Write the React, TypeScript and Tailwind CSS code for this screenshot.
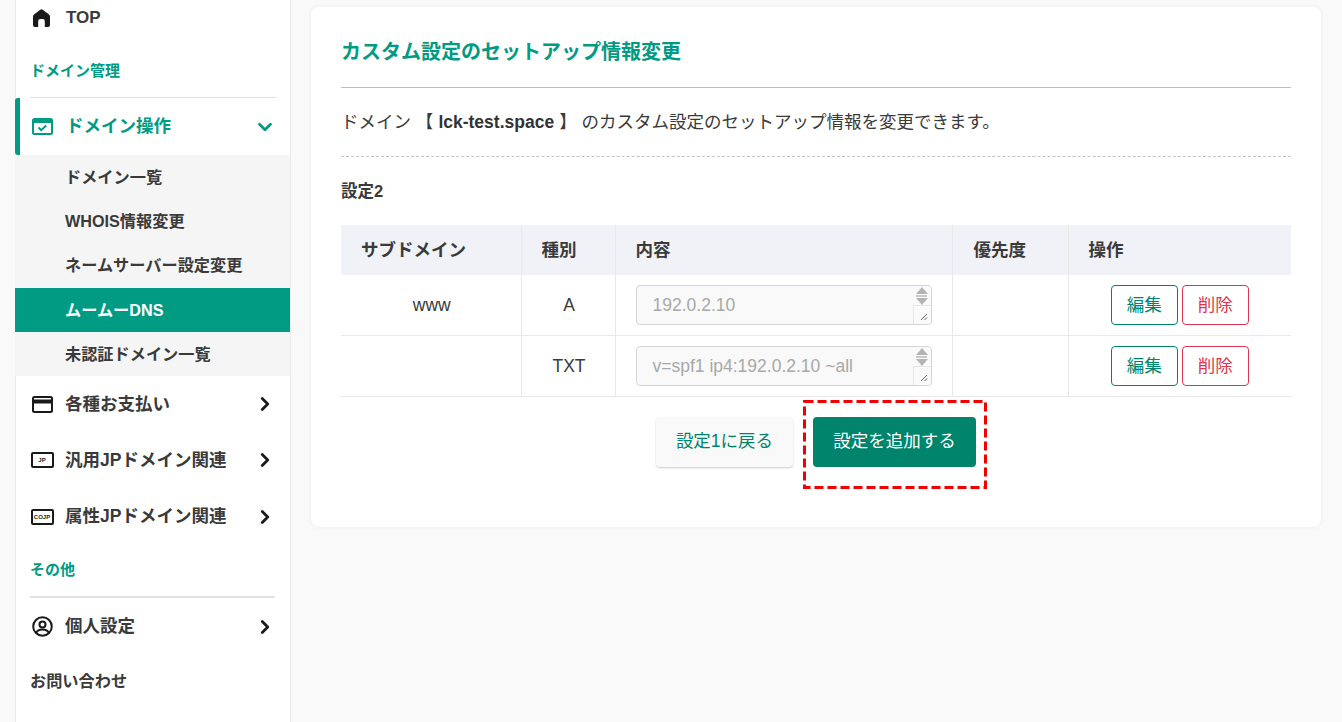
import { ChevronDown, ChevronRight } from "lucide-react";
import type { ReactNode } from "react";

const subItems = [
  { label: "ドメイン一覧", h: "h-[44px]" },
  { label: "WHOIS情報変更", h: "h-[44px]" },
  { label: "ネームサーバー設定変更", h: "h-[45px]" },
  { label: "ムームーDNS", h: "h-[44px]" },
  { label: "未認証ドメイン一覧", h: "h-[44px]" },
];

function HomeIcon() {
  return (
    <svg viewBox="0 0 17 18" className="h-[18px] w-[17px] fill-[#1a1a1a]">
      <path d="M7.3.7a2 2 0 0 1 2.4 0l6 4.6A2.6 2.6 0 0 1 17 7.4V16a2 2 0 0 1-2 2h-3.200V12a2 2 0 0 0-2-2H7.200a2 2 0 0 0-2 2v6H2a2 2 0 0 1-2-2V7.400a2.600 2.600 0 0 1 1.300-2.100z" />
    </svg>
  );
}

function DomainIcon() {
  return (
    <svg viewBox="0 0 21 17" className="h-[17px] w-[21px]" fill="none" stroke="#009b82">
      <rect x="1" y="1" width="19" height="15" rx="1.5" strokeWidth="2" />
      <path d="M1 3.500h19" strokeWidth="3" />
      <path d="M6.5 9.5l2.7 2.7 5-4.6" strokeWidth="2" />
    </svg>
  );
}

function CardIcon() {
  return (
    <svg viewBox="0 0 21 17" className="h-[17px] w-[21px]" fill="none" stroke="#1a1a1a">
      <rect x="1" y="1" width="19" height="15" rx="1.5" strokeWidth="2" />
      <path d="M1 5.500h19" strokeWidth="4" />
    </svg>
  );
}

function LabelIcon({ label }: { label: string }) {
  return (
    <span className="flex h-[16px] w-[23px] items-center justify-center rounded-[2px] border-2 border-[#1a1a1a] font-['Liberation_Sans',sans-serif] text-[6px] leading-none font-bold text-[#1a1a1a]">
      {label}
    </span>
  );
}

function UserIcon() {
  return (
    <svg viewBox="0 0 21 21" className="h-[21px] w-[21px]" fill="none" stroke="#1a1a1a" strokeWidth="2">
      <circle cx="10.5" cy="10.5" r="9.3" />
      <circle cx="10.5" cy="8.5" r="3" />
      <path d="M4.2 17c1-2.4 3.500-3.400 6.300-3.400s5.300 1 6.300 3.400" />
    </svg>
  );
}

function MenuRow({ icon, label, h }: { icon: ReactNode; label: string; h: string }) {
  return (
    <div className={`flex items-center pr-[14px] pl-[14px] ${h}`}>
      <span className="flex w-[24px] justify-center">{icon}</span>
      <span className="ml-[11px] flex-1 text-[17.5px] font-bold text-[#3a3a3a]">{label}</span>
      <ChevronRight className="h-[22px] w-[22px] text-[#1a1a1a]" strokeWidth={3} />
    </div>
  );
}

function Sidebar() {
  return (
    <aside className="ml-[15px] h-[722px] w-[276px] shrink-0 border-r border-l border-[#e8e8e8] bg-white">
      <div className="flex h-[35px] items-center pl-[17px]">
        <HomeIcon />
        <span className="ml-[16px] text-[17px] font-bold text-[#3a3a3a]">TOP</span>
      </div>
      <div className="mx-[14px] flex h-[63px] items-end border-b border-[#e2e2e2] pb-[16px] text-[15px] leading-[20px] font-bold text-[#009b82]">
        ドメイン管理
      </div>
      <div className="-ml-px flex h-[57px] items-center rounded-l-[3px] border-l-[5px] border-[#009b82] pr-[14px] pl-[10px]">
        <span className="flex w-[24px] justify-center">
          <DomainIcon />
        </span>
        <span className="ml-[12px] flex-1 text-[17.5px] font-bold text-[#009b82]">ドメイン操作</span>
        <ChevronDown className="h-[22px] w-[22px] text-[#009b82]" strokeWidth={3} />
      </div>
      <ul className="-ml-px bg-[#f5f5f5]">
        {subItems.map((s) =>
          s.label === "ムームーDNS" ? (
            <li key={s.label} className={`flex items-center bg-[#009b82] pl-[50px] text-[16.2px] font-bold text-white ${s.h}`}>
              {s.label}
            </li>
          ) : (
            <li key={s.label} className={`flex items-center pl-[50px] text-[16.2px] font-bold text-[#3a3a3a] ${s.h}`}>
              {s.label}
            </li>
          ),
        )}
      </ul>
      <MenuRow icon={<CardIcon />} label="各種お支払い" h="h-[56px]" />
      <MenuRow icon={<LabelIcon label="JP" />} label="汎用JPドメイン関連" h="h-[56px]" />
      <MenuRow icon={<LabelIcon label="COJP" />} label="属性JPドメイン関連" h="h-[57px]" />
      <div className="mx-[14px] mr-[15px] flex h-[53px] items-end border-b-2 border-[#e2e2e2] pb-[16px] text-[15px] leading-[20px] font-bold text-[#009b82]">
        その他
      </div>
      <MenuRow icon={<UserIcon />} label="個人設定" h="h-[57px]" />
      <div className="flex h-[52px] items-center pl-[14px] text-[16.2px] font-bold text-[#3a3a3a]">お問い合わせ</div>
    </aside>
  );
}

function ValueBox({ value }: { value: string }) {
  return (
    <div className="relative h-[40px] w-[296px] overflow-hidden rounded-[4px] border border-[#d4d4d4] bg-[#f9f9f9] pl-[16px] text-[17.5px] leading-[38px] text-[#a8a8a8]">
      {value}
      {/* spin arrows + resize grip */}
      <div className="absolute top-0 right-0 h-full w-[18px] bg-[#fafafa]">
        <div className="mx-auto mt-[1px] h-0 w-0 border-x-[6px] border-b-[7px] border-x-transparent border-b-[#b4b4b4]" />
        <div className="mx-auto mt-[1px] h-[2px] w-[11px] bg-[#c8c8c8]" />
        <div className="mx-auto mt-[1px] h-0 w-0 border-x-[6px] border-t-[7px] border-x-transparent border-t-[#b4b4b4]" />
        <svg viewBox="0 0 18 19" className="absolute right-0 bottom-0 h-[19px] w-[18px]" fill="none">
          <path d="M.5 19V.5H18" stroke="#e6e6e6" />
          <path d="M8 15l6-6M11.500 15l2.500-2.500" stroke="#666" />
        </svg>
      </div>
    </div>
  );
}

function Row({ sub, type, value }: { sub: string; type: string; value: string }) {
  return (
    <tr className="border-b border-[#e8e8e8]">
      <td className="border-r border-[#e8e8e8] pl-[2px] text-center">{sub}</td>
      <td className="border-r border-[#e8e8e8] pl-[2px] text-center">{type}</td>
      <td className="border-r border-[#e8e8e8] pl-[20px]">
        <ValueBox value={value} />
      </td>
      <td className="border-r border-[#e8e8e8]" />
      <td>
        <div className="flex justify-center gap-[4px]">
          <button className="h-[40px] w-[67px] rounded-[4px] border border-[#00846c] text-[#00846c]">編集</button>
          <button className="h-[40px] w-[67px] rounded-[4px] border border-[#dc3550] text-[#dc3550]">削除</button>
        </div>
      </td>
    </tr>
  );
}

export default function App() {
  return (
    <div className="flex h-[722px] overflow-hidden bg-[#f9f9f9] font-['Liberation_Sans','Noto_Sans_CJK_JP',sans-serif] text-[#3a3a3a]">
      <Sidebar />
      <main className="flex-1 pt-[7px] pr-[21px] pl-[20px]">
        <section className="h-[520px] rounded-[8px] bg-white px-[30px] shadow-[0_0_4px_rgba(0,0,0,0.06)]">
          <h1 className="flex h-[81px] items-center border-b border-[#bdbdbd] pt-[10px] text-[20px] font-bold text-[#009b82]">
            カスタム設定のセットアップ情報変更
          </h1>
          <p className="flex h-[69px] items-center border-b border-dashed border-[#c4c4c4] text-[17.5px]">
            ドメイン&nbsp;【 <b className="mx-[5px] text-[#333]">lck-test.space</b> 】&nbsp;のカスタム設定のセットアップ情報を変更できます。
          </p>
          <h2 className="flex h-[68px] items-center text-[16.5px] font-bold">設定2</h2>
          <table className="w-[950px] table-fixed border-collapse text-[17.5px]">
            <colgroup>
              <col className="w-[180px]" />
              <col className="w-[94px]" />
              <col className="w-[337px]" />
              <col className="w-[116px]" />
              <col />
            </colgroup>
            <thead>
              <tr className="h-[50px] bg-[#f0f2f7] text-left">
                <th className="border-r border-[#e8e8e8] pl-[20px] font-bold">サブドメイン</th>
                <th className="border-r border-[#e8e8e8] pl-[20px] font-bold">種別</th>
                <th className="border-r border-[#e8e8e8] pl-[20px] font-bold">内容</th>
                <th className="border-r border-[#e8e8e8] pl-[21px] font-bold">優先度</th>
                <th className="pl-[20px] font-bold">操作</th>
              </tr>
            </thead>
            <tbody className="[&>tr]:h-[60.5px]">
              <Row sub="www" type="A" value="192.0.2.10" />
              <Row sub="" type="TXT" value="v=spf1 ip4:192.0.2.10 ~all" />
            </tbody>
          </table>
          <div className="mt-[20px] flex justify-center gap-[20px]">
            <button className="h-[50px] w-[137px] rounded-[4px] bg-[#f9f9f9] text-[17.5px] text-[#00846c] shadow-[0_1px_2px_rgba(0,0,0,0.2)]">
              設定1に戻る
            </button>
            <div className="relative">
              <button className="h-[50px] w-[163px] rounded-[4px] bg-[#00846c] text-[17.5px] text-white">設定を追加する</button>
              {/* red callout drawn over the button */}
              <svg className="absolute -top-[17px] -left-[10px] h-[89px] w-[184px]" viewBox="0 0 184 89" fill="none">
                <rect x="1.5" y="1.5" width="181" height="86" stroke="#f00000" strokeWidth="3" strokeDasharray="9 4" />
              </svg>
            </div>
          </div>
        </section>
      </main>
    </div>
  );
}
